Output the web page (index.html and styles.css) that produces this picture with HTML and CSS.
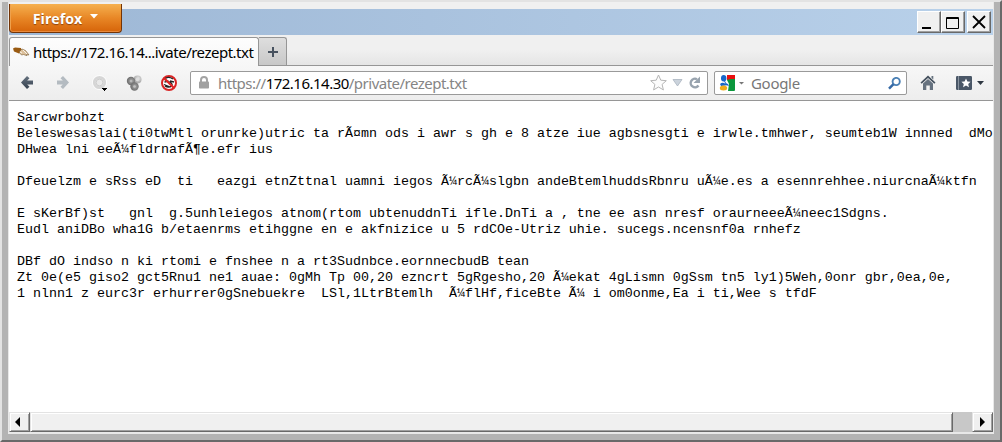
FILE: index.html
```html
<!DOCTYPE html>
<html lang="de">
<head>
<meta charset="utf-8">
<title>rezept.txt</title>
<link rel="stylesheet" href="styles.css">
</head>
<body>
<div class="window">
  <div class="inner">
    <header class="titlebar">
      <button class="app-menu">Firefox<svg width="8" height="5" viewBox="0 0 8 5"><path d="M0 0h8L4 4.5z" fill="#fff"/></svg></button>
      <div class="caption">
        <div class="win-btn"><svg width="23" height="21"><path d="M4 15h9v2H4z"/></svg></div>
        <div class="win-btn"><svg width="23" height="21"><path d="M4.500 5.500h12v11h-12zM4 6.500h13" fill="none" stroke="#000"/></svg></div>
        <div class="win-btn close"><svg width="23" height="21"><path d="M5 4l12 12M17 4L5 16" stroke="#000" stroke-width="1.800"/></svg></div>
      </div>
    </header>
    <nav class="tabs">
      <div class="tab">
        <svg width="17" height="10" viewBox="0 0 17 10"><path d="M0 1.500l2-1 6 .5 1 4-3 1.500-5-2z" fill="#9a5b12"/><path d="M6 5l3-3 3.500 1.500L16 8l-2.500-.5.5 1.200-3.500-1.200-2 .5z" fill="#dcc09a" stroke="#7a5a30" stroke-width=".6"/><path d="M10 3l4 4M7 5l2 1" stroke="#fff" stroke-width=".8"/></svg>
        <span class="tab-title">https://172.16.14...ivate/rezept.txt</span>
      </div>
      <div class="new-tab"><svg width="10" height="10"><path d="M5 0v10M0 5h10" stroke="#47525f" stroke-width="2"/></svg></div>
    </nav>
    <div class="toolbar">
      <svg class="tools" width="181" height="34" viewBox="0 0 181 34">
        <defs>
          <linearGradient id="steel" x2="0" y2="1"><stop stop-color="#66727f"/><stop offset="1" stop-color="#35414f"/></linearGradient>
          <radialGradient id="ball" cx=".6" cy=".35"><stop stop-color="#e4e4e4"/><stop offset="1" stop-color="#b0b0b0"/></radialGradient>
          <radialGradient id="dark" cx=".55" cy=".5"><stop stop-color="#aaa"/><stop offset="1" stop-color="#707070"/></radialGradient>
        </defs>
        <path d="M12 16.500l6-6.500 2.500 2.300-2.300 2.300H24v4h-5.800l2.300 2.200-2.500 2.300z" fill="url(#steel)"/>
        <path d="M60 16.500l-6-6.500-2.500 2.300 2.300 2.300H48v4h5.800l-2.300 2.200 2.500 2.300z" fill="#b4bbc1"/>
        <circle cx="90.500" cy="16.500" r="7.500" fill="#fcfcfc"/>
        <circle cx="90.500" cy="16.500" r="5.200" fill="#f4f4f4" stroke="#d6d6d6" stroke-width="2.800"/>
        <circle cx="90.500" cy="16.500" r="3.400" fill="#e9e9e9" stroke="#c4c4c4" stroke-width=".8"/>
        <path d="M93 22h5v1h-1v1h-1v1h-1v-1h-1v-1h-1z"/>
        <circle cx="128.500" cy="13.500" r="4" fill="url(#ball)"/>
        <circle cx="122" cy="15" r="4.200" fill="url(#dark)"/>
        <circle cx="125.500" cy="20.500" r="4.200" fill="url(#dark)"/>
        <circle cx="122" cy="15" r="1.300" fill="#b9b9b9"/><circle cx="125.500" cy="20.500" r="1.300" fill="#c3c3c3"/><circle cx="128.500" cy="13.500" r="1.800" fill="#dedede"/>
        <circle cx="160" cy="17" r="7" fill="#fff" stroke="#d92525" stroke-width="2"/>
        <path d="M164 13q-4-2.500-7-1-2 2 1 3.500 6 1 5 4-3 3-7 .5M155.500 16l4-1M155 18.500l5 2M161 15l4 1" fill="none" stroke="#222" stroke-width="1.300"/>
        <path d="M155 12l10 10" stroke="#e12424" stroke-width="2.200"/>
      </svg>
      <div class="field url">
        <svg width="12" height="14" viewBox="0 0 12 14"><path d="M3 7V4a3 3 0 0 1 6 0v3" fill="none" stroke="#a3a3a3" stroke-width="2"/><rect x="1" y="5.500" width="10" height="7" rx=".8" fill="#a0a0a0"/></svg>
        <span class="address">https://<b>172.16.14.30</b>/private/rezept.txt</span>
        <svg class="url-icons" width="52" height="20" viewBox="0 0 52 20">
          <path d="M9.500 2l2.300 5.200 5.500.5-4.200 3.700 1.300 5.500-4.900-2.900-4.900 2.900 1.300-5.500-4.200-3.700 5.500-.5z" fill="#fcfcfc" stroke="#b5b5b5"/>
          <path d="M24 6.500h9L28.500 13z" fill="#cbd3dc" stroke="#a9b4bf" stroke-width=".8"/>
          <path d="M49.500 12.500A4.300 4.300 0 1 1 48 6.200" fill="none" stroke="#98a3ae" stroke-width="2.400"/><path d="M51 3.500V10h-6.500z" fill="#98a3ae"/>
        </svg>
      </div>
      <div class="field search">
        <svg width="25" height="16" viewBox="0 0 25 16">
          <rect x="7" width="9" height="6" fill="#e80f0f"/><path d="M7 5l5-1h4v11q0 1-1 1H8z" fill="#0b973c"/><path d="M0 0h8v5l2 4-1 7H0z" fill="#fff"/>
          <ellipse cx="4.700" cy="3.200" rx="2.700" ry="3.200" fill="#1767ca"/><path d="M6 5q0 3 3 4l1 2-3-1-2-4z" fill="#1767ca"/><path d="M1 9q2-2 4-1l4 2q-5 1-7 1z" fill="#1767ca"/><ellipse cx="4.500" cy="13" rx="3.700" ry="2.500" fill="#efad1b"/>
          <path d="M20 7h5l-2.500 2.500z" fill="#777"/>
        </svg>
        <span class="engine">Google</span>
        <svg class="lens" width="13" height="13" viewBox="0 0 13 13"><circle cx="8.200" cy="4.500" r="3.600" fill="none" stroke="#4b80b5" stroke-width="1.900"/><path d="M5.500 7.200L1 11.700" stroke="#3569a5" stroke-width="2.400"/></svg>
      </div>
      <svg class="right-icons" width="66" height="20" viewBox="0 0 66 20">
        <path d="M.5 9.500L8 2.500l7.500 7-1.200 1.200L8 5l-6.300 5.700z" fill="#46525f"/><path d="M3 10.500L8 6l5 4.500V17H9.800v-4.500H6.300V17H3zM11.500 3h1.800v3.500L11.500 5z" fill="#66727f"/>
        <rect x="36" y="3" width="16" height="14" rx="1.200" fill="#4a5767"/><path d="M38.500 3v14" stroke="#8994a0"/><path d="M46 5.500l1.400 3 3.200.3-2.400 2.200.8 3.300-3-1.700-3 1.700.8-3.300-2.400-2.200 3.200-.3z" fill="#fff"/>
        <path d="M57 8h7l-3.500 4z" fill="#2f3842"/>
      </svg>
    </div>
    <main class="content"><pre class="text">Sarcwrbohzt
Beleswesaslai(ti0twMtl orunrke)utric ta rÃ¤mn ods i awr s gh e 8 atze iue agbsnesgti e irwle.tmhwer, seumteb1W innned  dMo
DHwea lni eeÃ¼fldrnafÃ¶e.efr ius

Dfeuelzm e sRss eD  ti   eazgi etnZttnal uamni iegos Ã¼rcÃ¼slgbn andeBtemlhuddsRbnru uÃ¼e.es a esennrehhee.niurcnaÃ¼ktfn

E sKerBf)st   gnl  g.5unhleiegos atnom(rtom ubtenuddnTi ifle.DnTi a , tne ee asn nresf oraurneeeÃ¼neec1Sdgns.
Eudl aniDBo wha1G b/etaenrms etihggne en e akfnizice u 5 rdCOe-Utriz uhie. sucegs.ncensnf0a rnhefz

DBf dO indso n ki rtomi e fnshee n a rt3Sudnbce.eornnecbudB tean
Zt 0e(e5 giso2 gct5Rnu1 ne1 auae: 0gMh Tp 00,20 ezncrt 5gRgesho,20 Ã¼ekat 4gLismn 0gSsm tn5 ly1)5Weh,0onr gbr,0ea,0e,
1 nlnn1 z eurc3r erhurrer0gSnebuekre  LSl,1LtrBtemlh  Ã¼flHf,ficeBte Ã¼ i om0onme,Ea i ti,Wee s tfdF</pre></main>
    <footer class="scrollbar">
      <div class="bevel arrow left"><svg width="5" height="10"><path d="M5 0v10L0 5z"/></svg></div>
      <div class="bevel thumb"></div>
      <div class="track"></div>
      <div class="bevel arrow"><svg width="5" height="10"><path d="M0 0v10l5-5z"/></svg></div>
    </footer>
  </div>
</div>
</body>
</html>
```
FILE: styles.css
```css
* { box-sizing: border-box; }
body { margin: 0; overflow: hidden; font-family: "Noto Sans", "Open Sans", sans-serif; }
svg { display: block; flex: none; }
.window {
  width: 1002px;
  height: 442px;
  padding: 0 6px 6px;
  background: #b3b3b3;
  border: 2px solid;
  border-color: #e3e3e3 #696969 #696969 #e3e3e3;
}
.inner {
  height: 432px;
  border: 1px solid #e8e8e8;
  border-top: 0;
  border-bottom-width: 2px;
  background: #fff;
  display: flex;
  flex-direction: column;
}
.titlebar {
  height: 33px;
  flex: none;
  padding-top: 2px;
  display: flex;
  justify-content: space-between;
  background: linear-gradient(#f0f0f0 7px, transparent 7px), linear-gradient(90deg, #9db7d5, #b9d1ea);
}
.app-menu {
  width: 113px;
  height: 29px;
  padding: 0;
  border: 1px solid #733406;
  border-top: 0;
  border-radius: 0 0 4px 4px;
  background: linear-gradient(#f5b04f, #e88726 50%, #d66409);
  box-shadow: inset 0 -1px #e98a3c, inset 1px 0 #efa14c;
  color: #fff;
  font: bold 14.2px "Open Sans", sans-serif;
  display: flex;
  align-items: center;
  justify-content: center;
  gap: 8px;
  text-shadow: 0 1px 1px #8d430d;
}
.app-menu svg { margin-bottom: 3px; }
.caption { display: flex; padding: 7px 2px 0 0; }
.win-btn {
  width: 24px;
  height: 22px;
  background: #f0f0f0;
  border: 1px solid;
  border-color: #fff #696969 #696969 #fff;
  box-shadow: inset -1px -1px #a0a0a0;
}
.close { margin-left: 2px; }
.tabs {
  height: 31px;
  flex: none;
  padding-top: 2px;
  display: flex;
  background: linear-gradient(#f0f0f0 50%, #e5e5e5);
  border-bottom: 1px solid #969696;
}
.tab {
  width: 250px;
  height: 29px;
  padding: 0 4px 0 3px;
  display: flex;
  align-items: center;
  gap: 3px;
  background: linear-gradient(#fdfdfd, #f7f7f7);
  border: 1px solid #969696;
  border-bottom: 0;
  border-radius: 3px 3px 0 0;
}
.tab-title { font-size: 15px; letter-spacing: -0.5px; white-space: nowrap; color: #000; }
.new-tab {
  width: 28px;
  height: 28px;
  display: grid;
  place-items: center;
  background: linear-gradient(#dedede, #c8c8c8);
  border: 1px solid #969696;
  border-left: 0;
  border-bottom: 0;
  border-radius: 0 3px 0 0;
}
.toolbar {
  height: 35px;
  flex: none;
  display: flex;
  align-items: center;
  background: linear-gradient(#f7f7f7, #ededed);
  border-bottom: 1px solid #969696;
}
.field {
  height: 24px;
  background: #fff;
  border: 1px solid #9a9a9a;
  border-radius: 2px;
  display: flex;
  align-items: center;
  font-size: 15px;
  white-space: nowrap;
}
.url { width: 518px; padding: 0 6px 0 7px; }
.address { margin-left: 8px; color: #858585; letter-spacing: -0.51px; }
.address b { font-weight: 400; color: #000; }
.url-icons, .lens { margin-left: auto; }
.search { width: 193px; margin-left: 6px; padding: 0 5px 0 4px; }
.engine { margin-left: 7px; color: #777; letter-spacing: -0.3px; }
.right-icons { margin-left: 13px; }
.content { flex: 1; min-height: 0; overflow: hidden; padding: 9px 0 0 8px; }
.text { margin: 0; font: 13.333px/16px "Liberation Mono", "Courier New", monospace; color: #000; }
.scrollbar { height: 20px; flex: none; display: flex; background: #c8c8c8; }
.bevel {
  background: #f0f0f0;
  border: 1px solid;
  border-color: #e3e3e3 #696969 #696969 #e3e3e3;
  box-shadow: inset 1px 1px #fff, inset -1px -1px #a0a0a0;
}
.arrow { width: 21px; display: grid; place-items: center; }
.left { padding-right: 4px; }
.thumb { width: 923px; }
.track { flex: 1; }
```
